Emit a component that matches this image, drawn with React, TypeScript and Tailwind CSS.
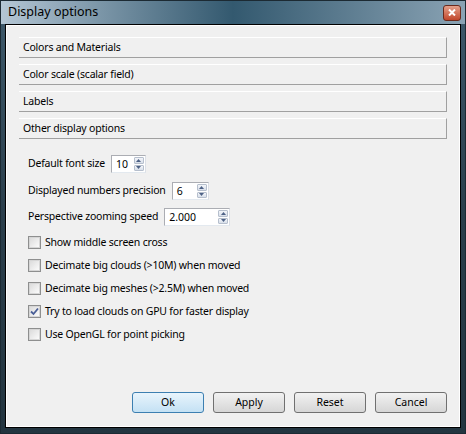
import React from 'react'

const font = { fontFamily: '"Noto Sans", "Liberation Sans", sans-serif' }

function SpinBox({ value, width }: { value: string; width: string }) {
    return (
        <div className={`flex h-[18px] ${width} items-stretch border border-[#abadb3] border-b-[#e3e9ef] border-r-[#dbdfe6] bg-white`}>
            <div className="flex flex-1 items-center pl-[4px] text-[10.5px] leading-none text-black">{value}</div>
            <div className="my-[1px] mr-[1px] flex w-[10px] flex-col gap-[1px]">
                <div className="flex flex-1 items-center justify-center rounded-[1px] border border-[#b6bfcd] bg-gradient-to-b from-[#f3f5f9] to-[#d8dfea]">
                    <svg width="5" height="3" viewBox="0 0 5 3">
                        <path d="M0 3 L2.5 0 L5 3 Z" fill="#4d6185" />
                    </svg>
                </div>
                <div className="flex flex-1 items-center justify-center rounded-[1px] border border-[#b6bfcd] bg-gradient-to-b from-[#f3f5f9] to-[#d8dfea]">
                    <svg width="5" height="3" viewBox="0 0 5 3">
                        <path d="M0 0 L2.5 3 L5 0 Z" fill="#4d6185" />
                    </svg>
                </div>
            </div>
        </div>
    )
}

function CheckRow({ label, checked }: { label: string; checked?: boolean }) {
    return (
        <div className="flex h-[23px] items-center gap-[4px]">
            <div className="flex h-[13px] w-[13px] items-center justify-center border border-[#8e8f8f] bg-white">
                <div className="flex h-[11px] w-[11px] items-center justify-center border border-[#d6d6d6] bg-gradient-to-br from-[#dcdcdc] to-[#fbfbfb]">
                    {checked && (
                        <svg width="9" height="9" viewBox="0 0 9 9">
                            <path d="M1 4.5 L3.5 7 L8 1.5" stroke="#4a5f97" strokeWidth="1.8" fill="none" />
                        </svg>
                    )}
                </div>
            </div>
            <span className="text-[10.5px] tracking-[-0.2px] text-black">{label}</span>
        </div>
    )
}

function Section({ title }: { title: string }) {
    return (
        <div className="flex h-[21px] items-center border-t border-r border-b border-t-white border-r-[#a0a0a0] border-b-[#a0a0a0] bg-[#f0f0f0] pl-[4px] text-[10.5px] tracking-[-0.2px] text-black">
            {title}
        </div>
    )
}

function Button({ label, primary }: { label: string; primary?: boolean }) {
    return (
        <div
            className={
                primary
                    ? 'flex h-[21px] w-[72px] items-center justify-center rounded-[3px] border border-[#3c7fb1] bg-gradient-to-b from-[#e8f4fc] to-[#c4e1f4] text-[10.5px] text-black'
                    : 'flex h-[21px] w-[72px] items-center justify-center rounded-[3px] border border-[#707070] bg-gradient-to-b from-[#f2f2f2] to-[#d6d6d6] text-[10.5px] text-black'
            }
        >
            {label}
        </div>
    )
}

export default function App() {
    return (
        <div style={font} className="flex h-[434px] w-[466px] flex-col border border-[#1c2a33] bg-gradient-to-b from-[#3e5a6c] via-[#2a3e4b] to-[#233540]">
            {/* Title bar */}
            <div className="flex h-[23px] items-center justify-between bg-gradient-to-r from-[#b4c6d4] via-[#33596f] to-[#8aa3b4] pl-[7px] pr-[4px]">
                <span className="text-[12.5px] text-black">Display options</span>
                <div className="flex h-[16px] w-[18px] items-center justify-center rounded-[3px] border border-[#6b2a1c] bg-gradient-to-b from-[#e4a08a] to-[#c0452a]">
                    <svg width="8" height="7" viewBox="0 0 8 7">
                        <path d="M1 0.5 L7 6.5 M7 0.5 L1 6.5" stroke="white" strokeWidth="2" />
                    </svg>
                </div>
            </div>

            {/* Client area */}
            <div className="flex flex-1 px-[4px] pb-[5px]">
                <div className="flex flex-1 border border-black">
                    <div className="flex flex-1 flex-col border border-white bg-[#f0f0f0] px-[12px] pt-[11px] pb-[13px]">
                        <div className="flex flex-col gap-[6px]">
                            <Section title="Colors and Materials" />
                            <Section title="Color scale (scalar field)" />
                            <Section title="Labels" />
                            <Section title="Other display options" />
                        </div>

                        <div className="flex flex-col pl-[9px] pt-[16px]">
                            <div className="flex h-[18px] items-center gap-[6px]">
                                <span className="text-[10.5px] tracking-[-0.2px] text-black">Default font size</span>
                                <SpinBox value="10" width="w-[35px]" />
                            </div>
                            <div className="mt-[9px] flex h-[18px] items-center gap-[6px]">
                                <span className="text-[10.5px] tracking-[-0.2px] text-black">Displayed numbers precision</span>
                                <SpinBox value="6" width="w-[37px]" />
                            </div>
                            <div className="mt-[8px] flex h-[18px] items-center gap-[6px]">
                                <span className="text-[10.5px] tracking-[-0.2px] text-black">Perspective zooming speed</span>
                                <SpinBox value="2.000" width="w-[66px]" />
                            </div>
                            <div className="mt-[5px] flex flex-col">
                                <CheckRow label="Show middle screen cross" />
                                <CheckRow label="Decimate big clouds (>10M) when moved" />
                                <CheckRow label="Decimate big meshes (>2.5M) when moved" />
                                <CheckRow label="Try to load clouds on GPU for faster display" checked />
                                <CheckRow label="Use OpenGL for point picking" />
                            </div>
                        </div>

                        <div className="mt-auto flex justify-end gap-[9px]">
                            <Button label="Ok" primary />
                            <Button label="Apply" />
                            <Button label="Reset" />
                            <Button label="Cancel" />
                        </div>
                    </div>
                </div>
            </div>
        </div>
    )
}
